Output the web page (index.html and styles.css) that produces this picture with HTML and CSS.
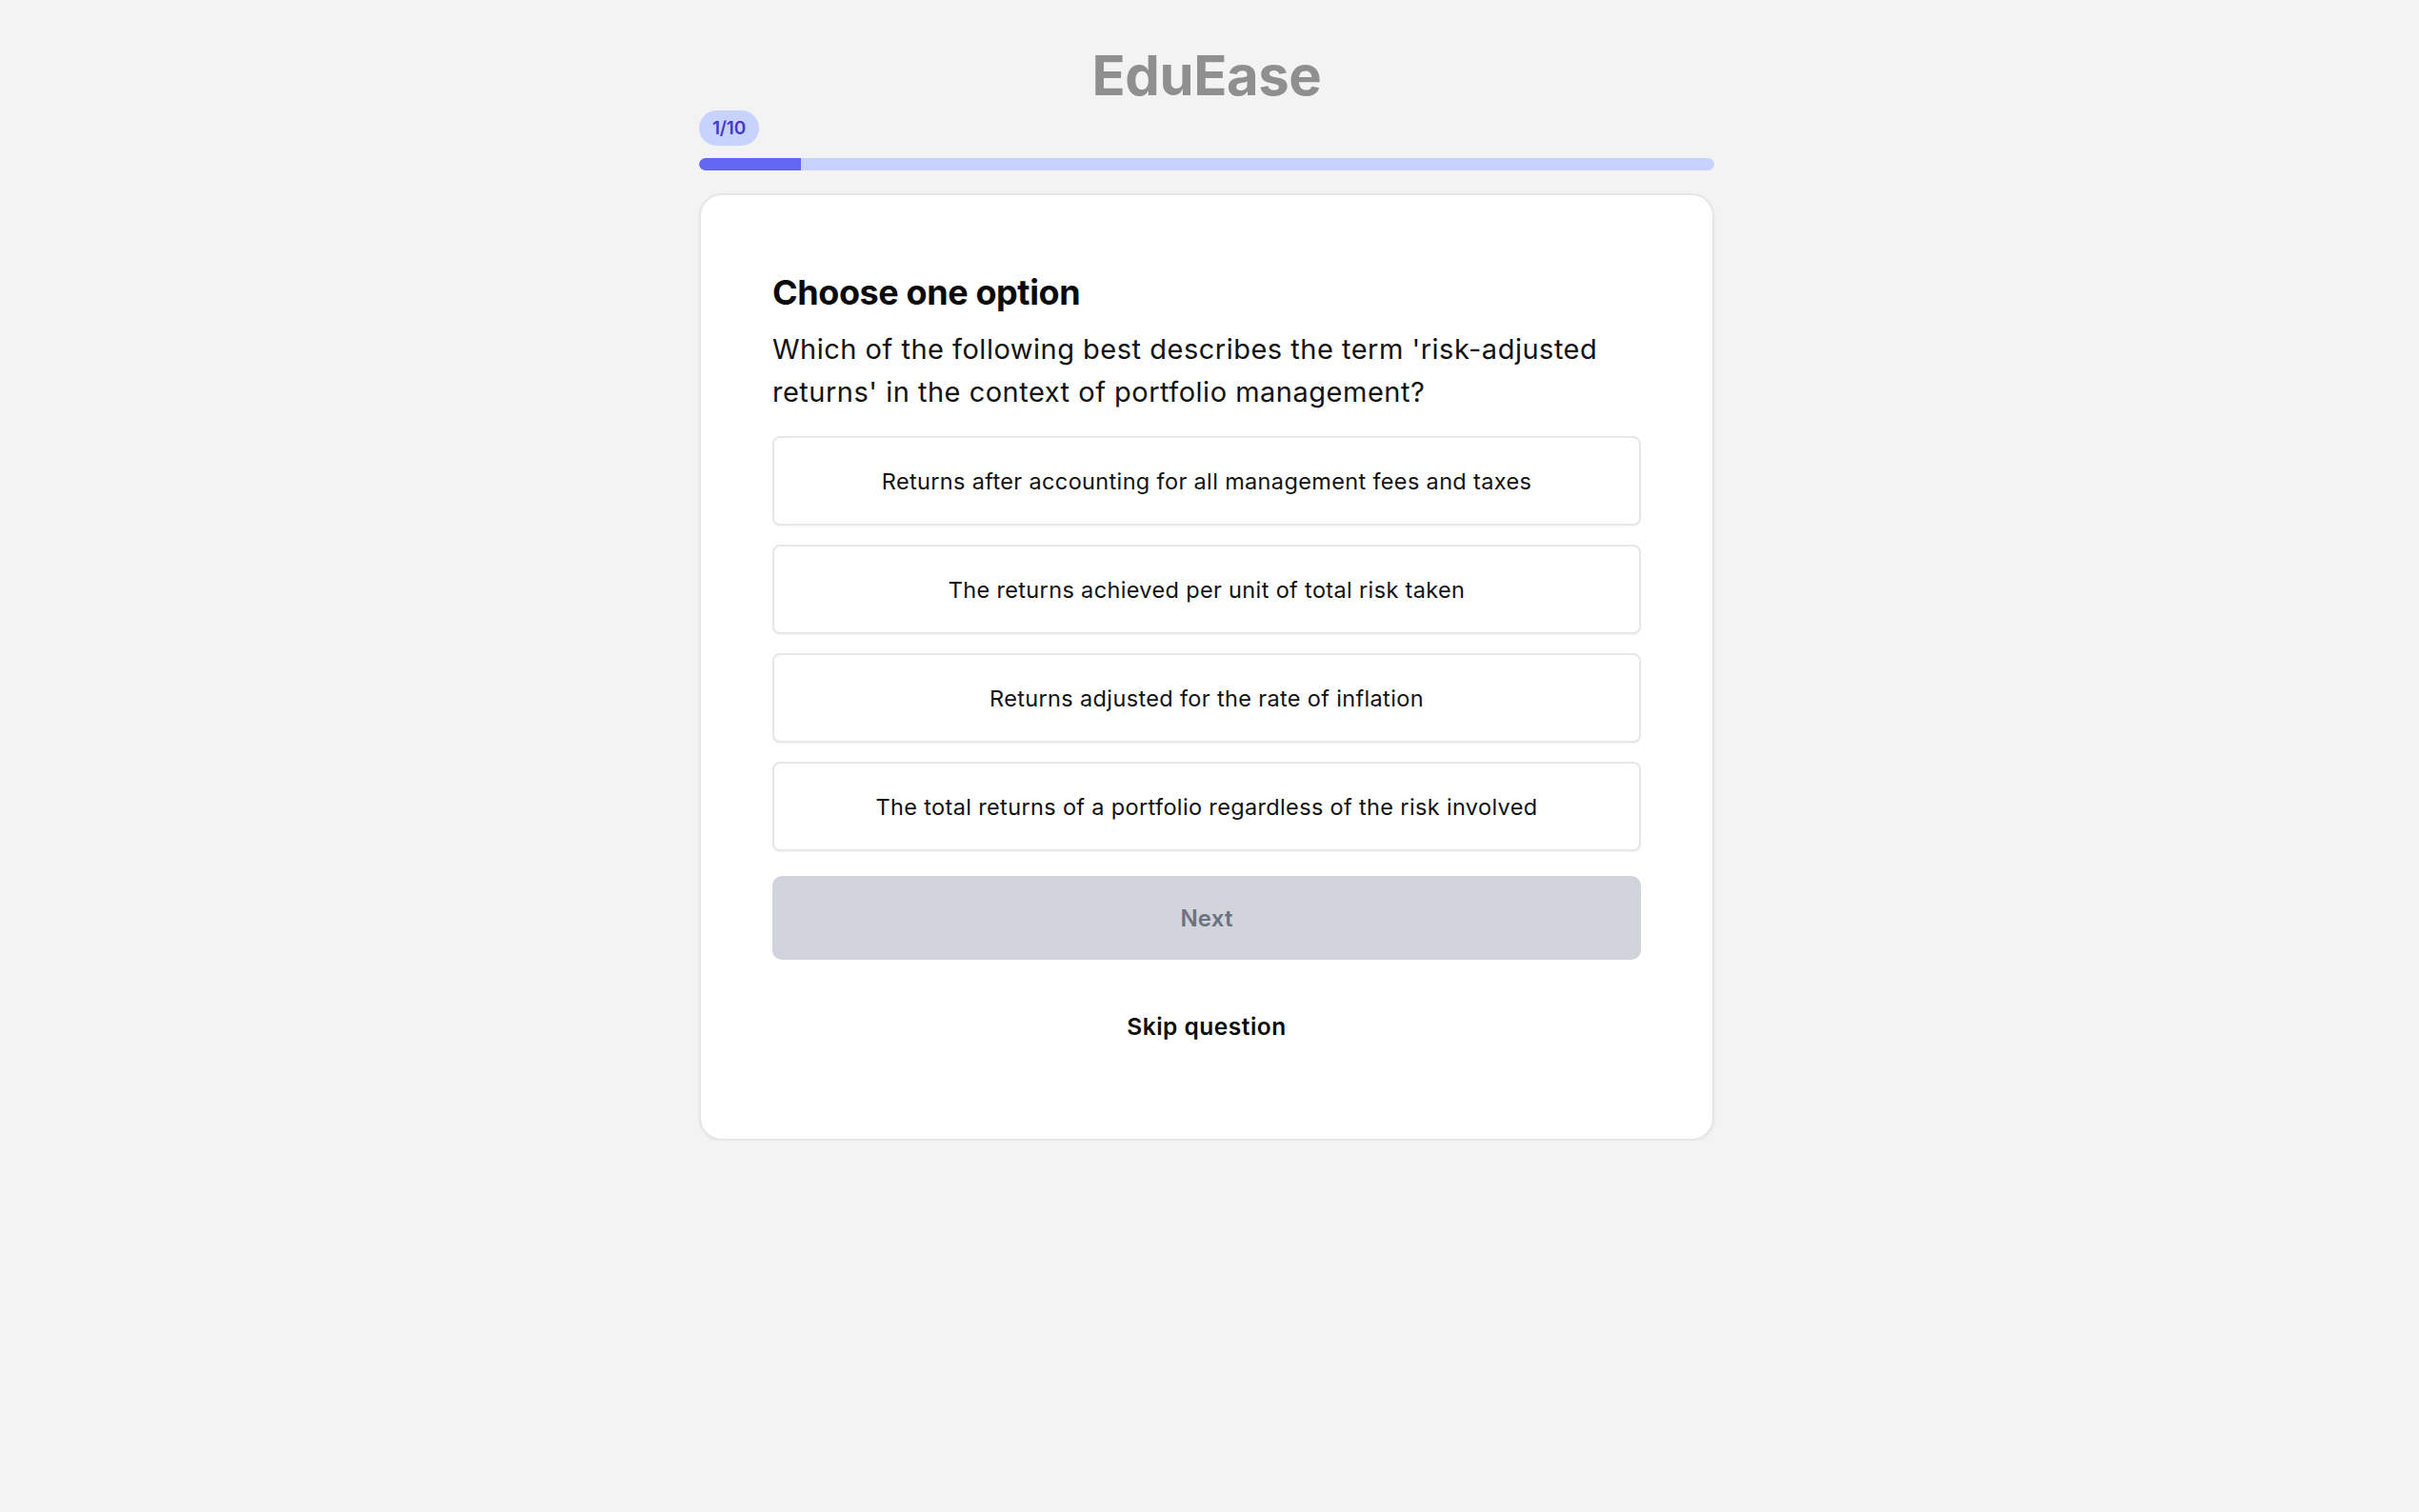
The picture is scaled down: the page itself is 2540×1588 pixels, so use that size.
FILE: index.html
```html
<!DOCTYPE html>
<html lang="en">
<head>
<meta charset="utf-8">
<title>EduEase</title>
<link rel="stylesheet" href="styles.css">
</head>
<body>
<main class="page">
  <h1 class="brand">EduEase</h1>
  <div class="progress-wrap">
    <span class="badge">1/10</span>
    <div class="track"><div class="fill" style="width:10%"></div></div>
  </div>
  <section class="card">
    <h2 class="title">Choose one option</h2>
    <p class="question">Which of the following best describes the term 'risk-adjusted returns' in the context of portfolio management?</p>
    <div class="options">
      <button class="option">Returns after accounting for all management fees and taxes</button>
      <button class="option">The returns achieved per unit of total risk taken</button>
      <button class="option">Returns adjusted for the rate of inflation</button>
      <button class="option">The total returns of a portfolio regardless of the risk involved</button>
    </div>
    <button class="next" disabled>Next</button>
    <button class="skip">Skip question</button>
  </section>
</main>
</body>
</html>
```

FILE: styles.css
```css
* { box-sizing: border-box; }
html, body {
  margin: 0;
  padding: 0;
  background: #f3f3f3;
  font-family: Inter, "Noto Sans", "Liberation Sans", sans-serif;
  color: #111;
}
body {
  padding-right: 6px;
}
.page {
  width: 1066px;
  margin: 0 auto;
  padding-top: 50px;
  display: flex;
  flex-direction: column;
}
.brand {
  margin: 0;
  text-align: center;
  font-size: 58px;
  line-height: 58px;
  font-weight: 700;
  color: #8f8f8f;
  letter-spacing: -0.4px;
}
.progress-wrap {
  margin-top: 8px;
  display: flex;
  flex-direction: column;
  align-items: flex-start;
  gap: 13px;
}
.badge {
  display: inline-flex;
  align-items: center;
  justify-content: center;
  height: 37px;
  padding: 0 14px;
  border-radius: 999px;
  background: #c7d2fe;
  color: #4338ca;
  font-size: 19px;
  font-weight: 600;
  letter-spacing: -0.2px;
}
.track {
  width: 100%;
  height: 13px;
  border-radius: 999px;
  background: #c7d2fe;
  overflow: hidden;
}
.fill {
  height: 100%;
  background: #6366f1;
  border-radius: 999px 0 0 999px;
}
.card {
  margin-top: 24px;
  background: #fff;
  border: 2px solid #e6e6e6;
  border-radius: 24px;
  box-shadow: 0 1px 3px rgba(0,0,0,0.06);
  padding: 78px 75px 100px;
  display: flex;
  flex-direction: column;
}
.title {
  margin: 0;
  font-size: 36px;
  line-height: 48px;
  font-weight: 700;
  color: #0a0a0a;
  letter-spacing: -0.4px;
}
.question {
  margin: 13px 0 0;
  font-size: 29px;
  line-height: 45px;
  font-weight: 400;
  color: #111;
  letter-spacing: 0.5px;
}
.options {
  margin-top: 24px;
  display: flex;
  flex-direction: column;
  gap: 20px;
}
.option {
  height: 94px;
  display: flex;
  align-items: center;
  justify-content: center;
  background: #fff;
  border: 2px solid #e5e7eb;
  border-radius: 8px;
  box-shadow: 0 1px 2px rgba(0,0,0,0.05);
  font-family: inherit;
  font-size: 23.5px;
  color: #111;
  letter-spacing: 0.35px;
  cursor: pointer;
}
.next {
  margin-top: 26px;
  height: 88px;
  border: none;
  border-radius: 10px;
  background: #d1d5db;
  color: #6b7280;
  font-family: inherit;
  font-size: 24px;
  font-weight: 600;
  letter-spacing: 0.2px;
}
.skip {
  margin-top: 52px;
  align-self: center;
  background: none;
  border: none;
  font-family: inherit;
  font-size: 24.5px;
  font-weight: 600;
  color: #0a0a0a;
  line-height: 36px;
  padding: 0;
  letter-spacing: 0.5px;
  cursor: pointer;
}
```
